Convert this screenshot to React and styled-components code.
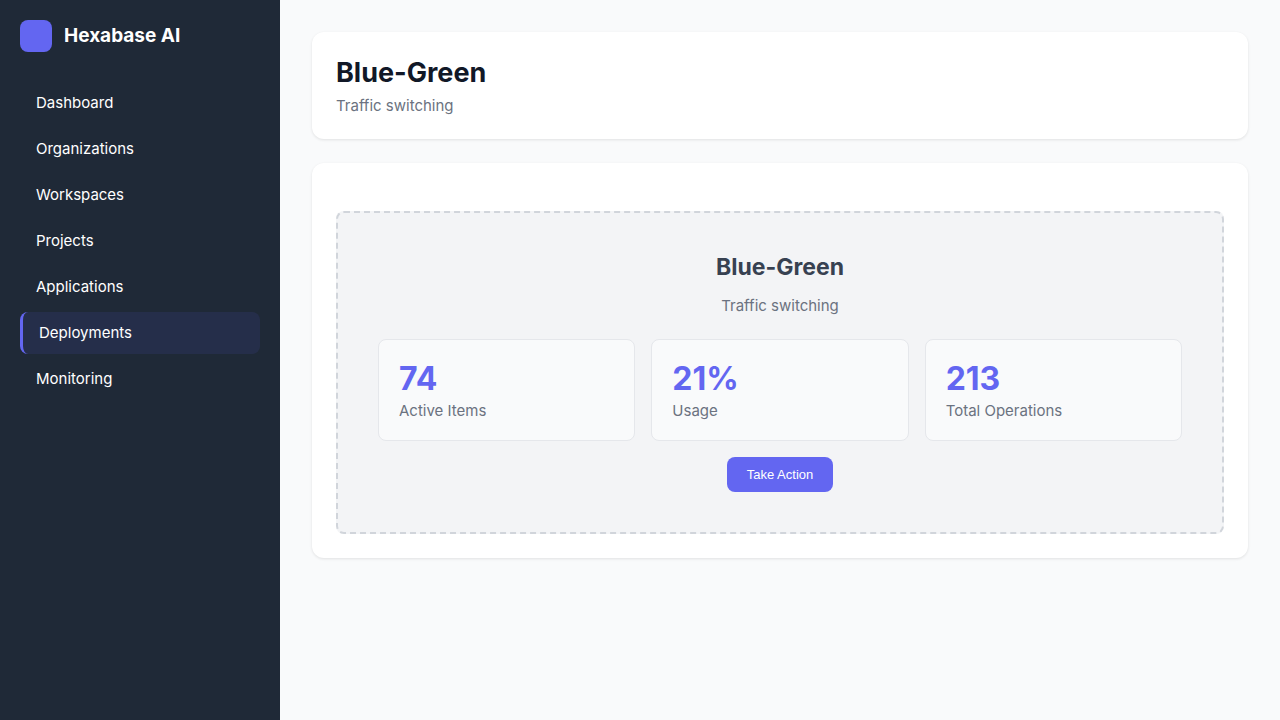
import React from "react";
import styled, { createGlobalStyle } from "styled-components";

const GlobalStyle = createGlobalStyle`
  * { margin: 0; padding: 0; box-sizing: border-box; }
  body {
    font-family: Inter, "Liberation Sans", sans-serif;
    font-size: 15px;
    background: #f9fafb;
    color: #111827;
  }
`;

const Layout = styled.div`
  display: flex;
  min-height: 100vh;
`;

const Sidebar = styled.aside`
  width: 280px;
  flex-shrink: 0;
  padding: 20px;
  background: #1f2937;
  color: #ffffff;
`;

const Brand = styled.div`
  display: flex;
  align-items: center;
  gap: 12px;
  margin-bottom: 30px;
  font-size: 19px;
  line-height: 32px;
  font-weight: 700;
`;

const BrandMark = styled.span`
  width: 32px;
  height: 32px;
  border-radius: 8px;
  background: #6366f1;
`;

const NavList = styled.ul`
  display: grid;
  gap: 4px;
  list-style: none;
`;

const NavLink = styled.a`
  display: block;
  padding: 12px 16px;
  line-height: 18px;
  border-radius: 8px;
  color: #ffffff;
  text-decoration: none;
  background: ${({ $active }) => ($active ? "rgba(99, 102, 241, 0.1)" : "transparent")};
  border-left: ${({ $active }) => ($active ? "3px solid #6366f1" : "0")};
`;

const Main = styled.main`
  flex: 1;
  min-width: 0;
  display: flex;
  flex-direction: column;
  gap: 24px;
  padding: 32px;
`;

const Card = styled.section`
  padding: ${({ $tall }) => ($tall ? "48px 24px 24px" : "24px")};
  border-radius: 12px;
  background: #ffffff;
  box-shadow: 0 1px 3px rgba(0, 0, 0, 0.1);
`;

const PageTitle = styled.h1`
  margin-bottom: 8px;
  font-size: 27px;
  line-height: 33px;
  font-weight: 700;
`;

const Subtitle = styled.p`
  line-height: 18px;
  color: #6b7280;
`;

const Panel = styled.div`
  padding: 40px;
  border: 2px dashed #d1d5db;
  border-radius: 8px;
  background: #f3f4f6;
  text-align: center;
`;

const PanelTitle = styled.h2`
  margin-bottom: 16px;
  font-size: 23px;
  line-height: 28px;
  font-weight: 700;
  color: #374151;
`;

const Stats = styled.div`
  display: grid;
  grid-template-columns: repeat(auto-fit, minmax(200px, 1fr));
  gap: 16px;
  margin: 24px 0 16px;
  text-align: left;
`;

const Stat = styled.div`
  padding: 20px;
  border: 1px solid #e5e7eb;
  border-radius: 8px;
  background: #f9fafb;
`;

const StatValue = styled.div`
  margin-bottom: 4px;
  font-size: 32px;
  line-height: 38px;
  font-weight: 700;
  color: #6366f1;
`;

const StatLabel = styled.div`
  line-height: 18px;
  color: #6b7280;
`;

const ActionButton = styled.button`
  padding: 10px 20px;
  border: 0;
  border-radius: 8px;
  background: #6366f1;
  color: #ffffff;
  font-family: "Liberation Sans", Arial, sans-serif;
  font-size: 13px;
  line-height: 15px;
  font-weight: 500;
  cursor: pointer;
  vertical-align: top;
`;

const navItems = [
  "Dashboard",
  "Organizations",
  "Workspaces",
  "Projects",
  "Applications",
  "Deployments",
  "Monitoring",
];

const stats = [
  { value: "74", label: "Active Items" },
  { value: "21%", label: "Usage" },
  { value: "213", label: "Total Operations" },
];

export default function App() {
  return (
    <>
      <GlobalStyle />
      <Layout>
        <Sidebar>
          <Brand>
            <BrandMark />
            <span>Hexabase AI</span>
          </Brand>
          <nav>
            <NavList>
              {navItems.map((item) => {
                const active = item === "Deployments";
                return (
                  <li key={item}>
                    <NavLink
                      href={`#${item.toLowerCase()}`}
                      $active={active}
                      aria-current={active ? "page" : undefined}
                    >
                      {item}
                    </NavLink>
                  </li>
                );
              })}
            </NavList>
          </nav>
        </Sidebar>
        <Main>
          <Card>
            <PageTitle>Blue-Green</PageTitle>
            <Subtitle>Traffic switching</Subtitle>
          </Card>
          <Card $tall>
            <Panel>
              <PanelTitle>Blue-Green</PanelTitle>
              <Subtitle>Traffic switching</Subtitle>
              <Stats>
                {stats.map(({ value, label }) => (
                  <Stat key={label}>
                    <StatValue>{value}</StatValue>
                    <StatLabel>{label}</StatLabel>
                  </Stat>
                ))}
              </Stats>
              <ActionButton type="button">Take Action</ActionButton>
            </Panel>
          </Card>
        </Main>
      </Layout>
    </>
  );
}
